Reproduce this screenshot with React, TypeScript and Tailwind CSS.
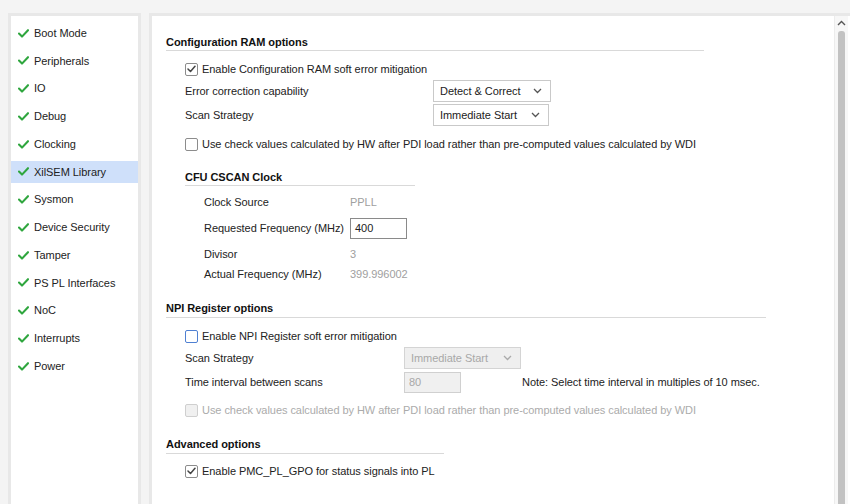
import React from "react";

const navItems = [
  "Boot Mode",
  "Peripherals",
  "IO",
  "Debug",
  "Clocking",
  "XilSEM Library",
  "Sysmon",
  "Device Security",
  "Tamper",
  "PS PL Interfaces",
  "NoC",
  "Interrupts",
  "Power",
];

function GreenCheck() {
  return (
    <svg width="11" height="9" viewBox="0 0 11 9" className="shrink-0">
      <path d="M1 4.6 L4 7.6 L10 1.2" fill="none" stroke="#2fa63e" strokeWidth="2.1" strokeLinecap="round" strokeLinejoin="round" />
    </svg>
  );
}

function CheckBox({ checked, variant = "normal" }: { checked?: boolean; variant?: "normal" | "focus" | "disabled" }) {
  const cls =
    variant === "focus"
      ? "border-[1.5px] border-[#4f80d2] bg-white"
      : variant === "disabled"
      ? "border border-[#cfcfcf] bg-[#f0f0f0]"
      : "border border-[#8c8c8c] bg-white";
  return (
    <div className={`w-[13px] h-[13px] rounded-[2px] ${cls} flex items-center justify-center shrink-0`}>
      {checked && (
        <svg width="9" height="8" viewBox="0 0 9 8">
          <path d="M1 4 L3.5 6.5 L8 1.2" fill="none" stroke="#444" strokeWidth="1.5" strokeLinecap="round" strokeLinejoin="round" />
        </svg>
      )}
    </div>
  );
}

function Chevron({ color = "#555" }: { color?: string }) {
  return (
    <svg width="9" height="6" viewBox="0 0 9 6">
      <path d="M1 1 L4.5 4.5 L8 1" fill="none" stroke={color} strokeWidth="1.3" />
    </svg>
  );
}

function Select({ value, width, disabled }: { value: string; width: string; disabled?: boolean }) {
  return (
    <div
      className={`${width} h-[22px] border flex items-center justify-between pl-[6px] pr-[8px] ${
        disabled ? "bg-[#efefef] border-[#d4d4d4] text-[#a8a8a8]" : "bg-white border-[#c9c9c9] text-[#222]"
      }`}
    >
      <span>{value}</span>
      <Chevron color={disabled ? "#aaa" : "#555"} />
    </div>
  );
}

function SectionTitle({ title, line }: { title: string; line: string }) {
  return (
    <div className={`${line} border-b border-[#d9d9d9] font-bold text-[#111] leading-[14px]`}>{title}</div>
  );
}

export default function App() {
  return (
    <div
      className="w-[850px] h-[504px] overflow-hidden bg-[#f4f4f4] flex items-start pt-[13px] pl-[8px] gap-[8px] text-[11px] tracking-[-0.05px] text-[#222]"
      style={{ fontFamily: '"Liberation Sans", Arial, sans-serif' }}
    >
      {/* Sidebar */}
      <div className="w-[133px] h-[500px] shrink-0 border-[3px] border-[#e8e8e8] bg-white pt-[6px]">
        {navItems.map((item) => (
          <div
            key={item}
            className={`h-[22px] mb-[5.75px] flex items-center pl-[7px] gap-[5px] ${
              item === "XilSEM Library" ? "bg-[#cfe0fa]" : ""
            }`}
          >
            <GreenCheck />
            <span>{item}</span>
          </div>
        ))}
      </div>

      {/* Main panel */}
      <div className="w-[704px] h-[500px] shrink-0 border-[3px] border-[#e8e8e8] bg-white flex">
        <div className="flex-1 pl-[14px] pt-[19px] flex flex-col">
          {/* Configuration RAM options */}
          <div className="pb-[1px] w-[538px] border-b border-[#d9d9d9]">
            <SectionTitleText title="Configuration RAM options" />
          </div>
          <div className="pl-[19px] flex flex-col">
            <div className="h-[22px] mt-[7px] flex items-center gap-[4px]">
              <CheckBox checked />
              <span>Enable Configuration RAM soft error mitigation</span>
            </div>
            <div className="h-[22px] flex items-center">
              <span className="w-[248px]">Error correction capability</span>
              <Select value="Detect & Correct" width="w-[118px]" />
            </div>
            <div className="h-[22px] mt-[2px] flex items-center">
              <span className="w-[248px]">Scan Strategy</span>
              <Select value="Immediate Start" width="w-[116px]" />
            </div>
            <div className="h-[22px] mt-[7px] flex items-center gap-[4px]">
              <CheckBox />
              <span>Use check values calculated by HW after PDI load rather than pre-computed values calculated by WDI</span>
            </div>

            {/* CFU CSCAN Clock */}
            <div className="mt-[15px] pb-[1px] w-[230px] border-b border-[#d9d9d9]">
              <SectionTitleText title="CFU CSCAN Clock" />
            </div>
            <div className="pl-[19px] flex flex-col">
              <div className="h-[22px] mt-[5px] flex items-center">
                <span className="w-[146px]">Clock Source</span>
                <span className="text-[#a0a0a0]">PPLL</span>
              </div>
              <div className="h-[22px] mt-[4px] flex items-center">
                <span className="w-[146px]">Requested Frequency (MHz)</span>
                <div className="w-[57px] h-[21px] border border-[#8a8a8a] flex items-center pl-[4px]">400</div>
              </div>
              <div className="h-[22px] mt-[4px] flex items-center">
                <span className="w-[146px]">Divisor</span>
                <span className="text-[#a0a0a0]">3</span>
              </div>
              <div className="h-[18px] flex items-center">
                <span className="w-[146px]">Actual Frequency (MHz)</span>
                <span className="text-[#a0a0a0]">399.996002</span>
              </div>
            </div>
          </div>

          {/* NPI Register options */}
          <div className="mt-[18px] pb-[2px] w-[600px] border-b border-[#d9d9d9]">
            <SectionTitleText title="NPI Register options" />
          </div>
          <div className="pl-[19px] flex flex-col">
            <div className="h-[22px] mt-[7px] flex items-center gap-[4px]">
              <CheckBox variant="focus" />
              <span>Enable NPI Register soft error mitigation</span>
            </div>
            <div className="h-[22px] flex items-center">
              <span className="w-[219px]">Scan Strategy</span>
              <Select value="Immediate Start" width="w-[117px]" disabled />
            </div>
            <div className="h-[22px] mt-[2px] flex items-center">
              <span className="w-[219px]">Time interval between scans</span>
              <div className="w-[57px] h-[21px] border border-[#d0d0d0] bg-[#f0f0f0] text-[#a8a8a8] flex items-center pl-[4px]">80</div>
              <span className="ml-[61px]">Note: Select time interval in multiples of 10 msec.</span>
            </div>
            <div className="h-[22px] mt-[6px] flex items-center gap-[4px] text-[#ababab]">
              <CheckBox variant="disabled" />
              <span>Use check values calculated by HW after PDI load rather than pre-computed values calculated by WDI</span>
            </div>
          </div>

          {/* Advanced options */}
          <div className="mt-[16px] pb-[2px] w-[278px] border-b border-[#d9d9d9]">
            <SectionTitleText title="Advanced options" />
          </div>
          <div className="pl-[19px] flex flex-col">
            <div className="h-[22px] mt-[6px] flex items-center gap-[4px]">
              <CheckBox checked />
              <span>Enable PMC_PL_GPO for status signals into PL</span>
            </div>
          </div>
        </div>

        {/* Scrollbar */}
        <div className="w-[14px] shrink-0 border-l border-[#ececec] bg-[#f7f7f7] flex flex-col items-center pt-[4px] mr-[2px]">
          <svg width="9" height="6" viewBox="0 0 9 6">
            <path d="M1 5 L4.5 1.5 L8 5" fill="none" stroke="#555" strokeWidth="1.4" />
          </svg>
          <div className="mt-[5px] w-[7px] flex-1 rounded-t-[3px] bg-[#c2c2c2]" />
        </div>
      </div>
    </div>
  );
}

function SectionTitleText({ title }: { title: string }) {
  return <div className="font-bold text-[#111] leading-[14px]">{title}</div>;
}

void SectionTitle;
